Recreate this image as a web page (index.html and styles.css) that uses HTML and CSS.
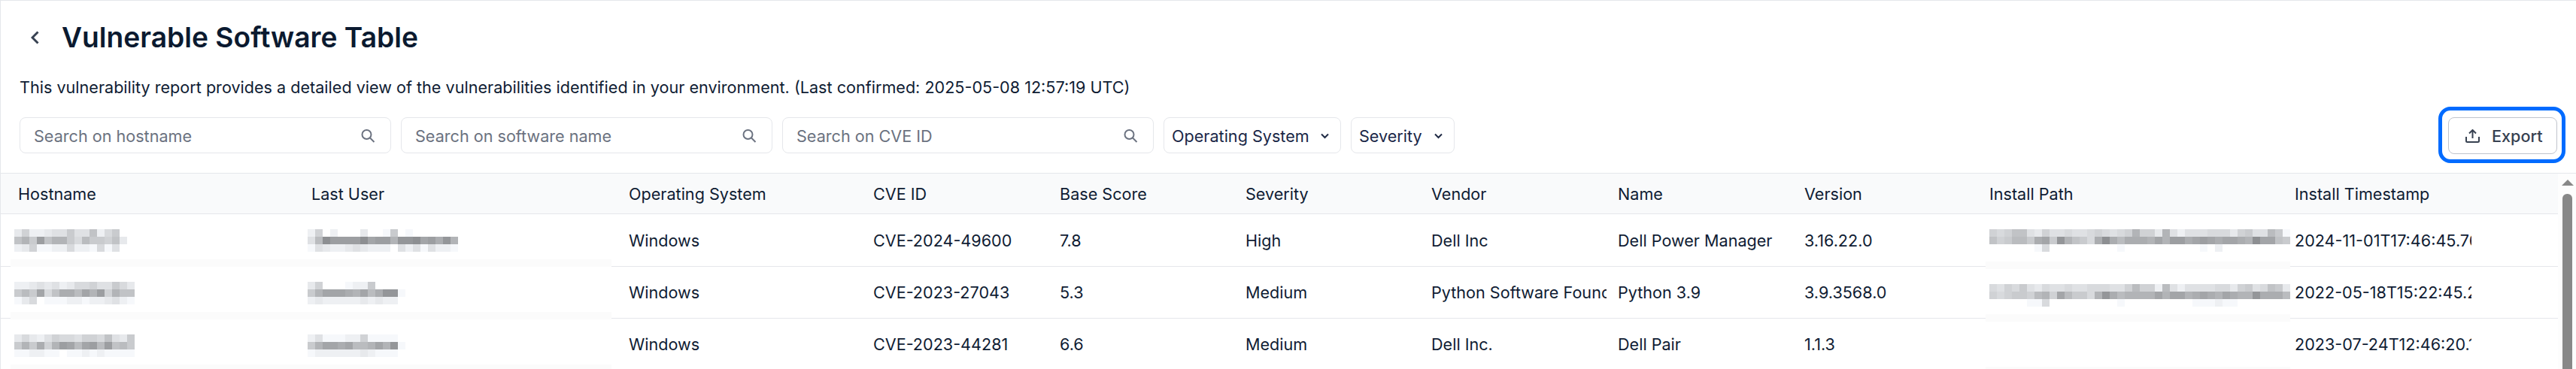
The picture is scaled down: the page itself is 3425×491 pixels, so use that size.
FILE: index.html
```html
<!DOCTYPE html>
<html lang="en">
<head>
    <meta charset="UTF-8">
    <title>Vulnerable Software Table</title>
    <link rel="stylesheet" href="styles.css">
</head>
<body>
    <div class="page">
        <div class="title-row">
            <svg class="back" width="11" height="18" viewBox="0 0 11 18" fill="none"><path d="M9.5 1.5 2 9l7.500 7.500" stroke="#374151" stroke-width="3"/></svg>
            <h1>Vulnerable Software Table</h1>
        </div>
        <p class="intro">This vulnerability report provides a detailed view of the vulnerabilities identified in your environment. (Last confirmed: 2025-05-08 12:57:19 UTC)</p>

        <div class="filters">
            <div class="search"><span>Search on hostname</span>
                <svg width="19" height="18" viewBox="0 0 19 18" fill="none"><circle cx="7.5" cy="7" r="6" stroke="#6b7280" stroke-width="2"/><path d="m12 11.5 5.5 5.5" stroke="#6b7280" stroke-width="2"/></svg>
            </div>
            <div class="search"><span>Search on software name</span>
                <svg width="19" height="18" viewBox="0 0 19 18" fill="none"><circle cx="7.5" cy="7" r="6" stroke="#6b7280" stroke-width="2"/><path d="m12 11.5 5.5 5.5" stroke="#6b7280" stroke-width="2"/></svg>
            </div>
            <div class="search"><span>Search on CVE ID</span>
                <svg width="19" height="18" viewBox="0 0 19 18" fill="none"><circle cx="7.5" cy="7" r="6" stroke="#6b7280" stroke-width="2"/><path d="m12 11.5 5.5 5.5" stroke="#6b7280" stroke-width="2"/></svg>
            </div>
            <div class="dropdown dropdown-os"><span>Operating System</span>
                <svg width="11" height="8" viewBox="0 0 11 8" fill="none"><path d="m1 1.5 4.5 4.5L10 1.5" stroke="#1f2a44" stroke-width="2"/></svg>
            </div>
            <div class="dropdown dropdown-severity"><span>Severity</span>
                <svg width="11" height="8" viewBox="0 0 11 8" fill="none"><path d="m1 1.5 4.5 4.5L10 1.5" stroke="#1f2a44" stroke-width="2"/></svg>
            </div>
            <div class="export-wrap">
                <button class="export">
                    <svg width="19" height="18" viewBox="0 0 19 18" fill="none"><path d="M1 10v5.5a1.5 1.5 0 0 0 1.500 1.500h14a1.500 1.500 0 0 0 1.500-1.500V10M9.500 12V1.500M5 5.500l4.500-4.500L14 5.500" stroke="#374151" stroke-width="2"/></svg>
                    Export
                </button>
                <div class="highlight"></div>
            </div>
        </div>

        <div class="table-area">
            <table>
                <colgroup>
                    <col class="col-host"><col class="col-user"><col class="col-os"><col class="col-md"><col class="col-sm"><col class="col-sm">
                    <col class="col-md"><col class="col-md"><col class="col-ver"><col class="col-path"><col class="col-time">
                </colgroup>
                <thead>
                    <tr>
                        <th>Hostname</th><th>Last User</th><th>Operating System</th><th>CVE ID</th><th>Base Score</th><th>Severity</th>
                        <th>Vendor</th><th>Name</th><th>Version</th><th>Install Path</th><th>Install Timestamp</th>
                    </tr>
                </thead>
                <tbody>
                    <tr>
                        <td class="redacted">
                            <div class="mosaic" data-cells="c9ddcbb8bb7da8f|7582755 8a688 97c|dc9eeddaddeaebf"></div>
                            <div class="mask mask-left"></div>
                        </td>
                        <td class="redacted"><div class="mosaic" data-cells="d9fdfffcffe8fefffffff|b602222032251103 2415|ebcddcbcdddfbdbebdde"></div></td>
                        <td>Windows</td><td>CVE-2024-49600</td><td>7.8</td><td>High</td><td>Dell Inc</td><td>Dell Power Manager</td><td>3.16.22.0</td>
                        <td class="redacted">
                            <div class="mosaic mosaic-path" data-cells="9a977bc9bbabba9aba9599c5bdbbbaaac98bb68e|7986684381578a4046444535224323433450 3378|ffffffeafffffffffeffffffffffefdfffffffff"></div>
                            <div class="mask mask-path"></div>
                        </td>
                        <td><div class="clip">2024-11-01T17:46:45.760Z</div></td>
                    </tr>
                    <tr>
                        <td class="redacted">
                            <div class="mosaic" data-cells="ddcbcbdcaa9bb8ac|8683a74463529577|ecafeeeddeddcbde"></div>
                            <div class="mask mask-left"></div>
                        </td>
                        <td class="redacted"><div class="mosaic" data-cells="c9fffedd8ffff|853334536411e|dcdddddcdcddf"></div></td>
                        <td>Windows</td><td>CVE-2023-27043</td><td>5.3</td><td>Medium</td><td><div class="clip clip-vendor">Python Software Foundation</div></td><td>Python 3.9</td><td>3.9.3568.0</td>
                        <td class="redacted">
                            <div class="mosaic mosaic-path" data-cells="ab9a8bcabbabbaaabb9699d6bdbbbbaac98ba78c|9a98896593688a5146555535335434534551 4446|fffffeeafffffffffefffffffffeeedeefffffff"></div>
                            <div class="mask mask-path"></div>
                        </td>
                        <td><div class="clip">2022-05-18T15:22:45.210Z</div></td>
                    </tr>
                    <tr>
                        <td class="redacted">
                            <div class="mosaic" data-cells="cacdb9aab99a7bc8|8584952363262768|eeddeefeededeeee"></div>
                            <div class="mask mask-left"></div>
                        </td>
                        <td class="redacted"><div class="mosaic" data-cells="dbeeedd9eeeef|853343665351e|eddddddcdeeef"></div></td>
                        <td>Windows</td><td>CVE-2023-44281</td><td>6.6</td><td>Medium</td><td>Dell Inc.</td><td>Dell Pair</td><td>1.1.3</td>
                        <td class="redacted"><div class="mask mask-path"></div></td>
                        <td><div class="clip">2023-07-24T12:46:20.110Z</div></td>
                    </tr>
                </tbody>
            </table>
            <div class="scrollbar">
                <div class="scroll-arrow"></div>
                <div class="scroll-thumb"></div>
            </div>
        </div>
    </div>
    <script src="script.js"></script>
</body>
</html>
```

FILE: styles.css
```css
* {
    box-sizing: border-box;
}
html, body {
    margin: 0;
    height: 491px;
    overflow: hidden;
    background: #fff;
}
body {
    font-family: Inter, "Liberation Sans", sans-serif;
    color: #0f1c33;
    font-size: 21.6px;
}
.page {
    height: 491px;
    border-top: 1px solid #e5e7eb;
    border-left: 1px solid #e5e7eb;
    overflow: hidden;
}
.title-row {
    display: flex;
    align-items: center;
    height: 44px;
    margin-top: 27px;
    padding-left: 40px;
}
.back {
    flex: none;
}
h1 {
    margin: 0 0 0 30px;
    font-size: 37.2px;
    line-height: 44px;
    font-weight: 600;
    color: #0b1a30;
}
.intro {
    margin: 28px 0 0 25px;
    font-size: 21.6px;
    line-height: 32px;
}
.filters {
    display: flex;
    gap: 13px;
    margin: 24px 25px 25px 25px;
    height: 49px;
}
.search, .dropdown {
    display: flex;
    align-items: center;
    justify-content: space-between;
    height: 48px;
    padding-top: 1px;
    border: 1px solid #e5e7eb;
    border-radius: 8px;
}
.search {
    width: 494px;
    padding-left: 18px;
    padding-right: 20px;
    color: #6b7280;
}
.dropdown {
    padding-left: 10px;
    padding-right: 15px;
    color: #1a2747;
}
.dropdown-os {
    width: 236px;
}
.dropdown-severity {
    width: 138px;
}
.export-wrap {
    position: relative;
    margin-left: auto;
}
.export {
    display: flex;
    align-items: center;
    gap: 16px;
    width: 145px;
    height: 49px;
    padding: 0 0 0 22px;
    background: #fff;
    border: 1px solid #c0c4cc;
    border-radius: 8px;
    font-family: inherit;
    font-size: 21.6px;
    font-weight: 500;
    color: #374151;
}
.highlight {
    position: absolute;
    top: -14px;
    right: -11px;
    bottom: -12px;
    left: -13px;
    border: 5px solid #006bff;
    border-radius: 16px;
}
.table-area {
    display: flex;
    border-top: 1px solid #e5e7eb;
    margin-left: -1px;
}
table {
    width: 3401px;
    table-layout: fixed;
    border-collapse: separate;
    border-spacing: 0;
    flex: none;
}
.col-host { width: 403px; }
.col-user { width: 422px; }
.col-os { width: 325px; }
.col-md { width: 248px; }
.col-sm { width: 247px; }
.col-ver { width: 246px; }
.col-path { width: 406px; }
.col-time { width: 361px; }
th, td {
    padding: 0 0 0 11px;
    text-align: left;
    font-weight: 400;
    white-space: nowrap;
    overflow: hidden;
    border-bottom: 1px solid #e5e7eb;
}
th {
    height: 54px;
    background: #f9fafb;
}
td {
    height: 69px;
}
tbody tr:first-child td {
    height: 70px;
}
th:first-child, td:first-child {
    padding-left: 24px;
}
td.redacted {
    position: relative;
    overflow: visible;
}
.clip {
    width: 235px;
    overflow: hidden;
}
.clip-vendor {
    width: 233px;
}
.mosaic {
    display: grid;
    grid-auto-flow: column;
    grid-template-rows: repeat(3, 10px);
    grid-auto-columns: 10px;
    width: max-content;
    margin: 2px 0 0 -5px;
}
tbody tr:first-child .mosaic {
    margin-top: 1px;
}
tbody tr:nth-child(3) .mosaic {
    margin-top: 4px;
}
.mosaic.mosaic-path {
    margin: 7px 0 0 0;
}
tbody tr:nth-child(2) .mosaic-path {
    margin-top: 8px;
}
.mask {
    position: absolute;
    z-index: 1;
    height: 10px;
    background: #fbfbfb;
}
.mask-left {
    left: 14px;
    bottom: -1px;
    width: 799px;
}
.mask-path {
    left: 6px;
    bottom: -4px;
    width: 405px;
}
tbody tr:nth-child(2) .mask {
    margin-bottom: -1px;
}
tbody tr:nth-child(3) .mask {
    margin-bottom: -2px;
}
.scrollbar {
    flex: 1;
    position: relative;
    height: 261px;
    background: #fdfdfd;
}
.scroll-arrow {
    margin: 8px 0 0 5px;
    width: 0;
    height: 0;
    border-left: 8px solid transparent;
    border-right: 8px solid transparent;
    border-bottom: 8px solid #888;
}
.scroll-thumb {
    width: 13px;
    height: 240px;
    margin: 11px 0 0 6px;
    background: #888;
    border-radius: 6px 6px 0 0;
}
```

FILE: script.js
```js
// draws the blurred-out values: each hex digit is one 10px tile, f = white
document.querySelectorAll(".mosaic").forEach(function (el) {
    const rows = el.dataset.cells.replace(/ /g, "").split("|");
    const cols = Math.max.apply(null, rows.map(r => r.length));
    for (let c = 0; c < cols; c++) {
        rows.forEach(function (row) {
            const d = parseInt(row[c] || "f", 16);
            const g = Math.round(255 - (15 - d) * 7.5);
            const tile = document.createElement("i");
            tile.style.background = "rgb(" + (g - (d < 15 ? 2 : 0)) + "," + g + "," + Math.min(g + 3, 255) + ")";
            el.appendChild(tile);
        });
    }
});
```
